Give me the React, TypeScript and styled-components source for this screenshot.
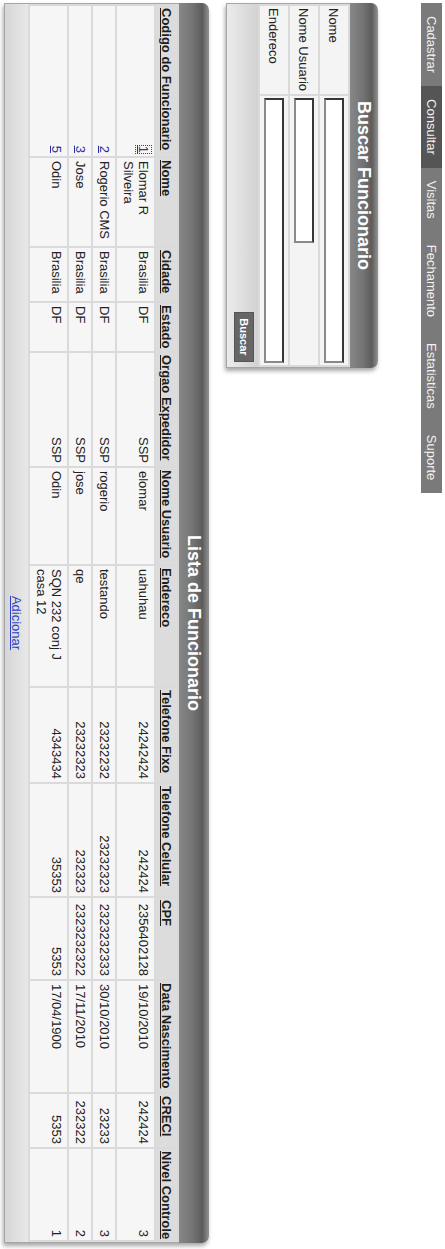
import React from 'react'
import styled, { createGlobalStyle } from 'styled-components'

// the whole page is shown turned a quarter clockwise, so it is laid out
// as a wide 1249x445 page and the stage is rotated into the tall window
const GlobalStyle = createGlobalStyle`
  html, body {
    margin: 0;
    padding: 0;
    background: #fff;
    overflow: hidden;
  }
  #root {
    width: 445px;
    height: 1249px;
    overflow: hidden;
  }
`

const Stage = styled.div`
  width: 1249px;
  height: 445px;
  box-sizing: border-box;
  padding: 3px;
  overflow: hidden;
  transform-origin: 0 0;
  transform: translateX(445px) rotate(90deg);
  font-family: "Liberation Sans", Arial, sans-serif;
  font-size: 13px;
  color: #222;
`

const Menu = styled.ul`
  display: flex;
  margin: 0;
  padding: 0;
  list-style: none;
  height: 21px;
`

const MenuItem = styled.li<{ $active?: boolean }>`
  padding: 0 13px;
  line-height: 21px;
  color: #f2f2f2;
  background: ${p => (p.$active ? '#555' : '#7a7a7a')};
  white-space: nowrap;
`

const Panel = styled.section<{ $width: number; $gap: number }>`
  width: ${p => p.$width}px;
  margin-top: ${p => p.$gap}px;
  box-shadow: 3px 1px 4px rgba(0, 0, 0, 0.35);
  border-radius: 7px 7px 0 0;
`

const PanelHeader = styled.header<{ $height: number }>`
  height: ${p => p.$height}px;
  line-height: ${p => p.$height}px;
  border-radius: 7px 7px 0 0;
  background: linear-gradient(to bottom, #939393 0, #5c5c5c 22%, #747474 55%, #878787 100%);
  color: #fff;
  font-weight: bold;
  font-size: 18px;
  text-align: center;
`

const PanelBody = styled.div`
  border: 1px solid #a6a6a6;
  border-top: none;
  background: #dadada;
`

const Grid = styled.table`
  width: 100%;
  border-collapse: separate;
  border-spacing: 2px;
  table-layout: fixed;
  background: #dadada;
`

const Col = styled.col<{ $w: number }>`
  width: ${p => p.$w}px;
`

const LabelCell = styled.td`
  background: #f4f4f4;
  padding: 0 2px;
  height: 28px;
  vertical-align: middle;
  white-space: nowrap;
`

const FieldCell = styled.td`
  background: #f4f4f4;
  padding: 0 2px;
  height: 28px;
  vertical-align: middle;
`

const Field = styled.input<{ $w: number }>`
  display: block;
  box-sizing: border-box;
  width: ${p => p.$w}px;
  height: 20px;
  border: 2px inset #8a8a8a;
  background: #fff;
  font: 13px "Liberation Sans", Arial, sans-serif;
`

const FormFooter = styled.div`
  height: 31px;
  box-sizing: border-box;
  padding: 4px 5px;
  display: flex;
  justify-content: flex-end;
  align-items: flex-start;
  background: linear-gradient(to bottom, #d2d2d2, #ebebeb);
`

const SearchButton = styled.button`
  width: 50px;
  height: 20px;
  padding: 0;
  border: 1px solid #555;
  background: #666;
  color: #fff;
  font: bold 11px "Liberation Sans", Arial, sans-serif;
`

const HeadCell = styled.th`
  background: #dcdcdc;
  padding: 3px 2px;
  line-height: 15px;
  text-align: left;
  white-space: nowrap;
  font-weight: bold;
`

const SortLink = styled.a`
  color: #1e1e1e;
  text-decoration: underline;
`

const Cell = styled.td<{ $align: 'left' | 'right' }>`
  background: #f6f6f6;
  padding: 3px 3px 4px;
  line-height: 15px;
  vertical-align: top;
  text-align: ${p => p.$align};
`

const IdLink = styled.a<{ $visited?: boolean }>`
  color: ${p => (p.$visited ? '#5a1f8c' : '#26329e')};
  text-decoration: underline;
  outline: ${p => (p.$visited ? '1px dotted #444' : 'none')};
`

const ListFooter = styled.div`
  height: 23px;
  line-height: 23px;
  text-align: center;
  background: linear-gradient(to bottom, #e8e8e8, #d6d6d6);
`

const AddLink = styled.a`
  color: #2b43c8;
  text-decoration: underline;
`

type Align = 'left' | 'right'

interface Column {
  key: string
  label: string
  width: number
  align: Align
}

const columns: Column[] = [
  { key: 'codigo', label: 'Codigo do Funcionario', width: 150, align: 'right' },
  { key: 'nome', label: 'Nome', width: 88, align: 'left' },
  { key: 'cidade', label: 'Cidade', width: 53, align: 'left' },
  { key: 'estado', label: 'Estado', width: 48, align: 'left' },
  { key: 'orgao', label: 'Orgao Expedidor', width: 113, align: 'right' },
  { key: 'usuario', label: 'Nome Usuario', width: 96, align: 'left' },
  { key: 'endereco', label: 'Endereco', width: 120, align: 'left' },
  { key: 'fixo', label: 'Telefone Fixo', width: 94, align: 'right' },
  { key: 'celular', label: 'Telefone Celular', width: 112, align: 'right' },
  { key: 'cpf', label: 'CPF', width: 81, align: 'right' },
  { key: 'nascimento', label: 'Data Nascimento', width: 111, align: 'left' },
  { key: 'creci', label: 'CRECI', width: 53, align: 'right' },
  { key: 'nivel', label: 'Nivel Controle', width: 91, align: 'right' },
]

type Row = Record<string, string>

const rows: Row[] = [
  {
    codigo: '1', nome: 'Elomar R Silveira', cidade: 'Brasilia', estado: 'DF', orgao: 'SSP',
    usuario: 'elomar', endereco: 'uahuhau', fixo: '24242424', celular: '242424',
    cpf: '2356402128', nascimento: '19/10/2010', creci: '242424', nivel: '3',
  },
  {
    codigo: '2', nome: 'Rogerio CMS', cidade: 'Brasilia', estado: 'DF', orgao: 'SSP',
    usuario: 'rogerio', endereco: 'testando', fixo: '23232232', celular: '23232323',
    cpf: '2323232333', nascimento: '30/10/2010', creci: '23233', nivel: '3',
  },
  {
    codigo: '3', nome: 'Jose', cidade: 'Brasilia', estado: 'DF', orgao: 'SSP',
    usuario: 'jose', endereco: 'qe', fixo: '23232323', celular: '232323',
    cpf: '2323232322', nascimento: '17/11/2010', creci: '232322', nivel: '2',
  },
  {
    codigo: '5', nome: 'Odin', cidade: 'Brasilia', estado: 'DF', orgao: 'SSP',
    usuario: 'Odin', endereco: 'SQN 232 conj J casa 12', fixo: '4343434', celular: '35353',
    cpf: '5353', nascimento: '17/04/1900', creci: '5353', nivel: '1',
  },
]

const menu = ['Cadastrar', 'Consultar', 'Visitas', 'Fechamento', 'Estatisticas', 'Suporte']

const searchFields = [
  { label: 'Nome', width: 265 },
  { label: 'Nome Usuario', width: 145 },
  { label: 'Endereco', width: 265 },
]

const App: React.FC = () => {
  return (
    <>
      <GlobalStyle />
      <Stage>
        <Menu>
          {menu.map(item => (
            <MenuItem key={item} $active={item === 'Consultar'}>{item}</MenuItem>
          ))}
        </Menu>

        <Panel $width={365} $gap={43}>
          <PanelHeader $height={28}>Buscar Funcionario</PanelHeader>
          <PanelBody>
            <Grid>
              <colgroup>
                <Col $w={88} />
                <Col $w={269} />
              </colgroup>
              <tbody>
                {searchFields.map(f => (
                  <tr key={f.label}>
                    <LabelCell>{f.label}</LabelCell>
                    <FieldCell>
                      <Field type="text" $w={f.width} />
                    </FieldCell>
                  </tr>
                ))}
              </tbody>
            </Grid>
            <FormFooter>
              <SearchButton>Buscar</SearchButton>
            </FormFooter>
          </PanelBody>
        </Panel>

        <Panel $width={1240} $gap={17}>
          <PanelHeader $height={30}>Lista de Funcionario</PanelHeader>
          <PanelBody>
            <Grid>
              <colgroup>
                {columns.map(c => <Col key={c.key} $w={c.width} />)}
              </colgroup>
              <thead>
                <tr>
                  {columns.map(c => (
                    <HeadCell key={c.key}>
                      <SortLink href="#">{c.label}</SortLink>
                    </HeadCell>
                  ))}
                </tr>
              </thead>
              <tbody>
                {rows.map(r => (
                  <tr key={r.codigo}>
                    {columns.map(c => (
                      <Cell key={c.key} $align={c.align}>
                        {c.key === 'codigo'
                          ? <IdLink href="#" $visited={r.codigo === '1'}>{r.codigo}</IdLink>
                          : r[c.key]}
                      </Cell>
                    ))}
                  </tr>
                ))}
              </tbody>
            </Grid>
            <ListFooter>
              <AddLink href="#">Adicionar</AddLink>
            </ListFooter>
          </PanelBody>
        </Panel>
      </Stage>
    </>
  )
}

export default App
